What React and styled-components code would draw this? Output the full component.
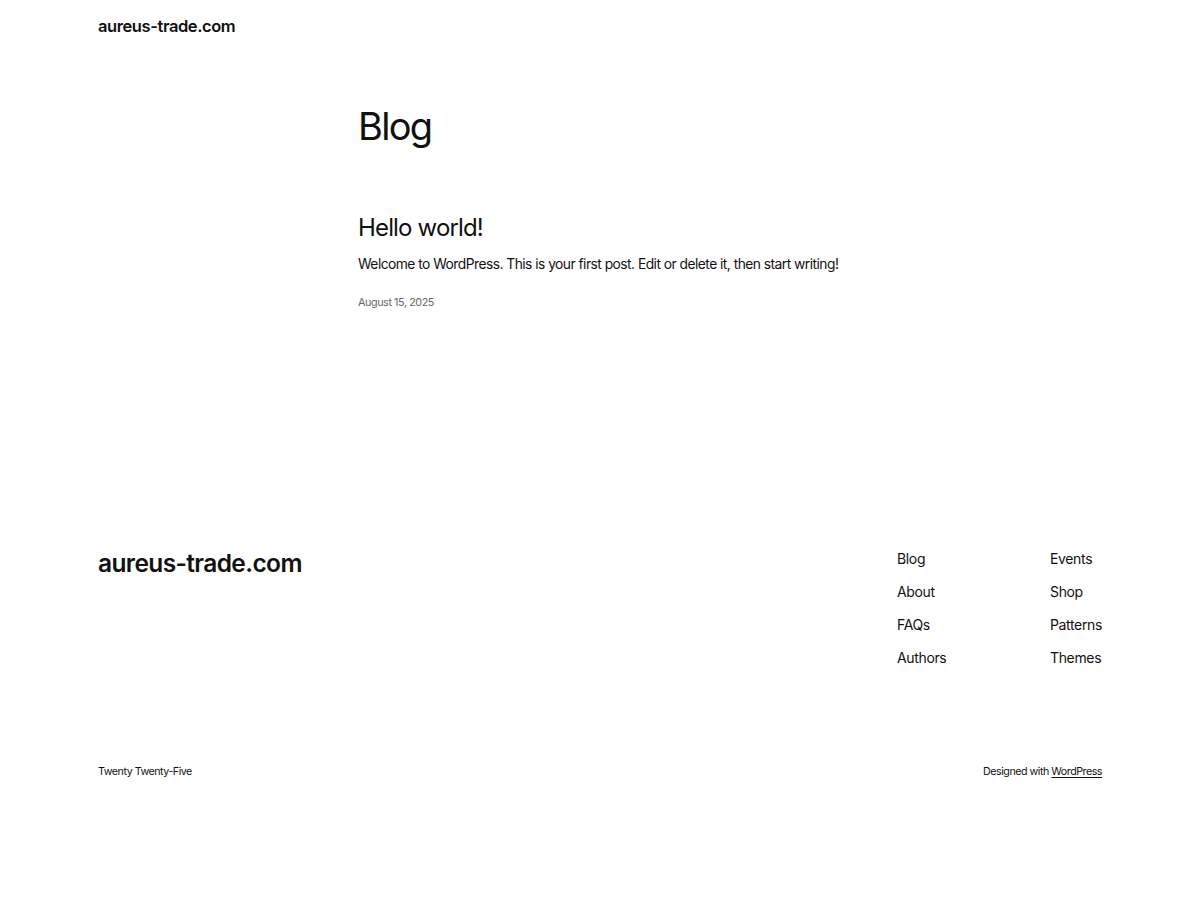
import React from "react";
import styled, { createGlobalStyle } from "styled-components";

const Global = createGlobalStyle`
  html, body { margin: 0; padding: 0; background: #fff; }
  body { font-family: Inter, "Noto Sans", sans-serif; color: #111; -webkit-font-smoothing: antialiased; }
  * { box-sizing: border-box; }
`;

const Page = styled.div`
  width: 1200px;
  min-height: 900px;
  display: flex;
  flex-direction: column;
`;

const Header = styled.header`
  padding: 16px 98px 0;
  height: 78px;
`;

const SiteTitle = styled.a`
  font-size: ${(p) => p.$size}px;
  font-weight: 600;
  letter-spacing: -0.025em;
  color: #111;
  text-decoration: none;
  line-height: 1.3;
`;

const Main = styled.main`
  width: 484px;
  margin: 0 auto;
  padding-top: 25px;
  height: 460px;
`;

const PageTitle = styled.h1`
  margin: 0;
  font-size: 38px;
  font-weight: 400;
  letter-spacing: -0.045em;
  line-height: 1.25;
`;

const Post = styled.article`
  margin-top: 62px;
`;

const PostTitle = styled.h2`
  margin: 0;
  font-size: 24px;
  font-weight: 400;
  letter-spacing: -0.035em;
  line-height: 1.25;
`;

const Excerpt = styled.p`
  margin: 11px 0 0;
  font-size: 13.8px;
  line-height: 1.5;
  letter-spacing: -0.038em;
  white-space: nowrap;
`;

const PostDate = styled.div`
  margin-top: 22px;
  font-size: 10.8px;
  color: #686868;
  letter-spacing: -0.04em;
`;

const Footer = styled.footer`
  padding: 0 98px;
`;

const FooterTop = styled.div`
  display: flex;
  justify-content: space-between;
  align-items: flex-start;
  height: 227px;
  padding-top: 8px;
`;

const FooterTitle = styled(SiteTitle)`
  margin-top: 2px;
`;

const NavGrid = styled.nav`
  display: grid;
  grid-template-columns: 153px auto;
  margin-top: 3px;
`;

const NavCol = styled.div`
  display: flex;
  flex-direction: column;
  gap: 13px;
`;

const NavLink = styled.a`
  font-size: 14px;
  line-height: 20px;
  color: #111;
  text-decoration: none;
  letter-spacing: -0.025em;
`;

const FooterBottom = styled.div`
  display: flex;
  justify-content: space-between;
  font-size: 10.7px;
  letter-spacing: -0.045em;
  color: #111;
`;

const Credit = styled.a`
  color: #111;
  text-decoration: underline;
  text-underline-offset: 2px;
`;

export default function App() {
  return (
    <>
      <Global />
      <Page>
        <Header>
          <SiteTitle $size={16.5} href="#">aureus-trade.com</SiteTitle>
        </Header>
        <Main>
          <PageTitle>Blog</PageTitle>
          <Post>
            <PostTitle>Hello world!</PostTitle>
            <Excerpt>Welcome to WordPress. This is your first post. Edit or delete it, then start writing!</Excerpt>
            <PostDate>August 15, 2025</PostDate>
          </Post>
        </Main>
        <Footer>
          <FooterTop>
            <FooterTitle $size={24.5} href="#">aureus-trade.com</FooterTitle>
            <NavGrid>
              <NavCol>
                <NavLink href="#">Blog</NavLink>
                <NavLink href="#">About</NavLink>
                <NavLink href="#">FAQs</NavLink>
                <NavLink href="#">Authors</NavLink>
              </NavCol>
              <NavCol>
                <NavLink href="#">Events</NavLink>
                <NavLink href="#">Shop</NavLink>
                <NavLink href="#">Patterns</NavLink>
                <NavLink href="#">Themes</NavLink>
              </NavCol>
            </NavGrid>
          </FooterTop>
          <FooterBottom>
            <span>Twenty Twenty-Five</span>
            <span>Designed with <Credit href="#">WordPress</Credit></span>
          </FooterBottom>
        </Footer>
      </Page>
    </>
  );
}
